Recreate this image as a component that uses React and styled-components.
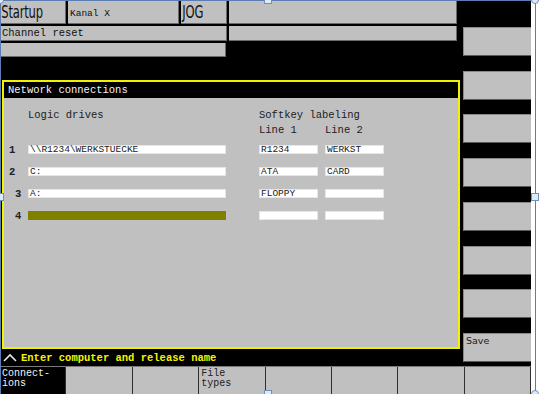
import React from 'react'
import styled, { createGlobalStyle } from 'styled-components'

const Global = createGlobalStyle`
body{
  margin: 0;
  background: #ffffff;
  font-family: "Liberation Mono", "DejaVu Sans Mono", monospace;
}
`

const drives = [
  { no: '1', indent: 5, path: '\\\\R1234\\WERKSTUECKE', l1: 'R1234', l2: 'WERKST' },
  { no: '2', indent: 5, path: 'C:', l1: 'ATA', l2: 'CARD' },
  { no: '3', indent: 11, path: 'A:', l1: 'FLOPPY', l2: '' },
  { no: '4', indent: 11, path: '', l1: '', l2: '', active: true },
]

const bottomKeys = [
  { text: ['Connect-', 'ions'], active: true },
  { text: [] },
  { text: [] },
  { text: ['File', 'types'] },
  { text: [] },
  { text: [] },
  { text: [] },
  { text: [] },
]

const sideKeys = ['', '', '', '', '', '', '', 'Save']

const App = () => {
  return (
    <Page>
      <Global />
      <Screen>
        <Main>
          <LeftCol>
            <HeaderRow cols="66px 111px 46px 228px" h={24}>
              <Cell><BigLabel>Startup</BigLabel></Cell>
              <Cell><SmallLabel>Kanal X</SmallLabel></Cell>
              <Cell><BigLabel>JOG</BigLabel></Cell>
              <Cell />
            </HeaderRow>
            <HeaderRow cols="227px 228px" h={15}>
              <Cell><Label>Channel reset</Label></Cell>
              <Cell />
            </HeaderRow>
            <HeaderRow cols="226px" h={14}>
              <Cell />
            </HeaderRow>

            <Dialog>
              <DialogTitle>Network connections</DialogTitle>
              <DialogBody>
                <TextRow>
                  <NumCell />
                  <HeadCell w={231}>Logic drives</HeadCell>
                  <HeadCell w={140}>Softkey labeling</HeadCell>
                </TextRow>
                <TextRow>
                  <NumCell />
                  <HeadCell w={231} />
                  <HeadCell w={66}>Line 1</HeadCell>
                  <HeadCell w={66}>Line 2</HeadCell>
                </TextRow>
                <Rows>
                  {drives.map((d) => (
                    <DriveRow key={d.no}>
                      <NumCell indent={d.indent}>{d.no}</NumCell>
                      <Field w={198} active={d.active}>{d.path}</Field>
                      <Field w={59} gap={33}>{d.l1}</Field>
                      <Field w={59} gap={7}>{d.l2}</Field>
                    </DriveRow>
                  ))}
                </Rows>
              </DialogBody>
            </Dialog>

            <StatusLine>
              <svg width="14" height="10" viewBox="0 0 14 10">
                <polyline points="1,8 7,2 13,8" fill="none" stroke="#e8e8e8" strokeWidth="1.6" />
              </svg>
              <StatusText>Enter computer and release name</StatusText>
            </StatusLine>
          </LeftCol>

          <SideKeys>
            {sideKeys.map((k, i) => (
              <SideKey key={i}>{k}</SideKey>
            ))}
          </SideKeys>
        </Main>

        <KeyBar>
          {bottomKeys.map((k, i) => (
            <BarKey key={i} active={k.active}>
              {k.text.map((t) => (
                <KeyLine key={t}>{t}</KeyLine>
              ))}
            </BarKey>
          ))}
        </KeyBar>
      </Screen>

      <Selection />
      <Handle style={{ left: -4, top: -4 }} round />
      <Handle style={{ left: 264, top: -4 }} />
      <Handle style={{ left: 531, top: -4 }} round />
      <Handle style={{ left: -4, top: 193 }} />
      <Handle style={{ left: 531, top: 193 }} />
      <Handle style={{ left: 264, top: 390 }} />
      <Handle style={{ left: 531, top: 390 }} round />
    </Page>
  )
}

export default App

const Page = styled.div`
position: relative;
width: 546px;
height: 394px;
overflow: hidden;
background: #ffffff;
`

const Screen = styled.div`
width: 531px;
height: 400px;
background: #000000;
display: flex;
flex-direction: column;
`

const Main = styled.div`
display: flex;
height: 366px;
`

const LeftCol = styled.div`
width: 460px;
display: flex;
flex-direction: column;
`

const HeaderRow = styled.div`
display: grid;
grid-template-columns: ${(p) => p.cols};
column-gap: 2px;
height: ${(p) => p.h}px;
margin-bottom: 2px;
`

const Cell = styled.div`
box-sizing: border-box;
background: #c0c0c0;
border-bottom: 1px solid #6a6a6a;
border-right: 1px solid #6a6a6a;
display: flex;
align-items: center;
overflow: hidden;
white-space: nowrap;
`

const BigLabel = styled.span`
font-family: "DejaVu Sans", sans-serif;
font-size: 17px;
color: #101010;
display: inline-block;
transform: scaleX(0.68);
transform-origin: left center;
padding-left: 2px;
letter-spacing: -0.3px;
`

const SmallLabel = styled.span`
font-size: 9.5px;
color: #101010;
padding-left: 2px;
padding-top: 3px;
`

const Label = styled.span`
font-size: 10.5px;
color: #101010;
padding-left: 2px;
`

const Dialog = styled.div`
margin-top: 21px;
margin-left: 2px;
width: 458px;
height: 269px;
box-sizing: border-box;
border: 2px solid #f2f200;
background: #c0c0c0;
display: flex;
flex-direction: column;
`

const DialogTitle = styled.div`
height: 16px;
background: #000000;
color: #f4f4f4;
font-size: 10.5px;
line-height: 16px;
padding-left: 4px;
`

const DialogBody = styled.div`
padding-top: 9px;
display: flex;
flex-direction: column;
`

const TextRow = styled.div`
display: flex;
height: 15px;
align-items: center;
`

const NumCell = styled.div`
width: 24px;
box-sizing: border-box;
padding-left: ${(p) => p.indent || 0}px;
font-size: 10.5px;
font-weight: bold;
color: #202020;
`

const HeadCell = styled.div`
width: ${(p) => p.w}px;
font-size: 10.5px;
color: #202020;
white-space: nowrap;
`

const Rows = styled.div`
margin-top: 8px;
display: flex;
flex-direction: column;
gap: 13px;
`

const DriveRow = styled.div`
display: flex;
align-items: center;
height: 9px;
`

const Field = styled.div`
width: ${(p) => p.w}px;
margin-left: ${(p) => p.gap || 0}px;
height: 9px;
box-sizing: border-box;
background: ${(p) => (p.active ? '#808000' : '#ffffff')};
box-shadow: inset 0 0 0 1px ${(p) => (p.active ? '#808000' : '#e6e6e6')};
font-size: 9.5px;
line-height: 10px;
color: #1a1a1a;
padding-left: 2px;
white-space: nowrap;
`

const StatusLine = styled.div`
margin-top: 1px;
height: 16px;
display: flex;
align-items: center;
gap: 4px;
padding-left: 3px;
`

const StatusText = styled.span`
color: #f4f400;
font-size: 10.5px;
font-weight: bold;
white-space: nowrap;
`

const SideKeys = styled.div`
width: 71px;
box-sizing: border-box;
padding: 27px 0 4px 3px;
display: flex;
flex-direction: column;
justify-content: space-between;
`

const SideKey = styled.div`
height: 29px;
box-sizing: border-box;
background: #c0c0c0;
border-top: 1px solid #8a8a8a;
border-left: 1px solid #8a8a8a;
border-bottom: 1px solid #5a5a5a;
font-family: "DejaVu Sans", sans-serif;
font-size: 9.5px;
color: #202020;
padding: 1px 2px;
`

const KeyBar = styled.div`
height: 34px;
display: grid;
grid-template-columns: repeat(8, 1fr);
background: #c0c0c0;
border-top: 1px solid #7a7a7a;
`

const BarKey = styled.div`
box-sizing: border-box;
border-right: 1px solid #303030;
background: ${(p) => (p.active ? '#000000' : '#c0c0c0')};
color: ${(p) => (p.active ? '#f4f4f4' : '#202020')};
font-size: 10px;
padding: 1px 2px;
white-space: nowrap;
overflow: hidden;
`

const KeyLine = styled.div`
height: 10px;
line-height: 11px;
`

const Selection = styled.div`
position: absolute;
left: 0;
top: 0;
width: 536px;
height: 400px;
box-sizing: border-box;
border: 1px solid #5a7db3;
pointer-events: none;
`

const Handle = styled.div`
position: absolute;
width: 8px;
height: 8px;
box-sizing: border-box;
background: #dfeaf7;
border: 1px solid #6f8fbf;
border-radius: ${(p) => (p.round ? '50%' : '0')};
`
